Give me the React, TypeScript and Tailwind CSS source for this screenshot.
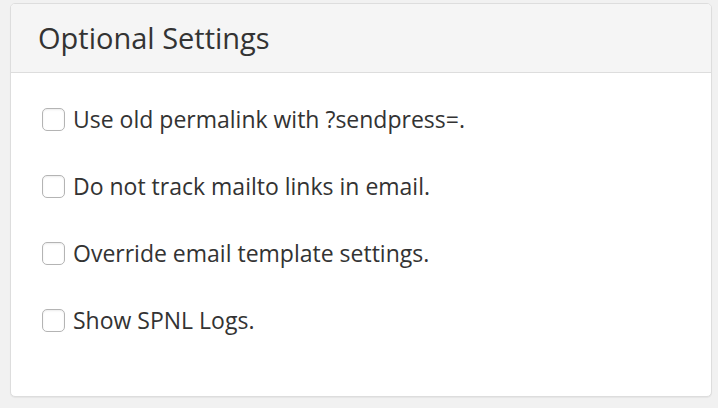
export default function App() {
  const options = [
    "Use old permalink with ?sendpress=.",
    "Do not track mailto links in email.",
    "Override email template settings.",
    "Show SPNL Logs.",
  ];

  return (
    <div
      className="w-[718px] h-[408px] bg-[#f1f1f1] pl-[10px] pr-[6px] pt-[3px]"
      style={{ fontFamily: '"Open Sans", "Liberation Sans", sans-serif' }}
    >
      {/* Panel */}
      <div className="h-[394px] rounded-[5px] border border-[#dddddd] bg-white shadow-[0_1px_1px_rgba(0,0,0,0.05)] overflow-hidden">
        {/* Header */}
        <div className="h-[69px] bg-[#f5f5f5] border-b border-[#dddddd] flex items-center pl-[27px]">
          <h3 className="text-[29px] text-[#333333] leading-none -mt-[2px]">Optional Settings</h3>
        </div>

        {/* Options */}
        <div className="pl-[31px] pt-[34px] flex flex-col gap-[43px]">
          {options.map((label) => (
            <label key={label} className="flex items-center gap-[8px] h-[24px]">
              <span className="w-[23px] h-[23px] rounded-[5px] border border-[#b4b4b4] bg-white shadow-[inset_0_1px_2px_rgba(0,0,0,0.08)] shrink-0" />
              <span className="text-[23px] text-[#333333] leading-none">{label}</span>
            </label>
          ))}
        </div>
      </div>
    </div>
  );
}
